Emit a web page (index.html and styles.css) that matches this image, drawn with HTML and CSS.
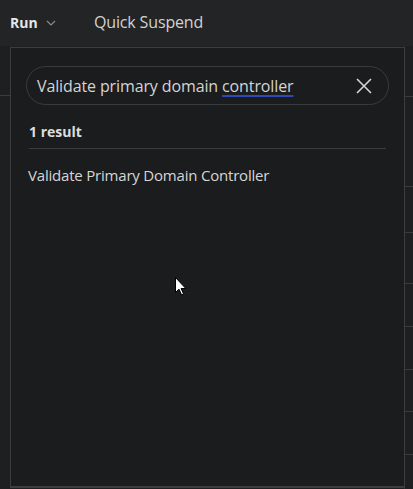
FILE: index.html
```html
<!DOCTYPE html>
<html>
<head>
<meta charset="utf-8">
<link rel="stylesheet" href="styles.css">
</head>
<body>
<header class="topbar">
  <button class="run">Run
    <svg class="chev" width="10" height="6" viewBox="0 0 10 6"><path d="M1 1 L5 5 L9 1" fill="none" stroke="#8a8b8d" stroke-width="1.2"/></svg>
  </button>
  <span class="quick">Quick Suspend</span>
</header>
<main class="content">
  <div class="col-left">
    <div class="row r-first"></div>
  </div>
  <div class="col-mid"></div>
  <div class="col-right">
    <div class="row h50"></div>
    <div class="row h90"></div>
    <div class="row h46"></div>
    <div class="row h51"></div>
    <div class="row h43"></div>
    <div class="row h43"></div>
    <div class="row h42"></div>
    <div class="row h43"></div>
  </div>

  <section class="panel">
    <div class="search">
      <span class="query">Validate primary domain <span class="spell">controller</span></span>
      <svg class="clear" width="16" height="16" viewBox="0 0 16 16"><path d="M1 1 L15 15 M15 1 L1 15" stroke="#d4d4d4" stroke-width="1.6" fill="none"/></svg>
    </div>
    <div class="count">1 result</div>
    <ul class="results">
      <li>Validate Primary Domain Controller</li>
    </ul>
  </section>

  <svg class="cursor" width="12" height="19" viewBox="0 0 12 19"><path d="M0.5 0.5 L0.5 15.5 L4 12.2 L6.6 18 L8.6 17.1 L6.1 11.5 L10.8 11.5 Z" fill="#fff" stroke="#000" stroke-width="1"/></svg>
</main>
</body>
</html>
```
FILE: styles.css
```css
* { box-sizing: border-box; }
html, body { margin: 0; padding: 0; }
body {
  width: 413px;
  height: 489px;
  overflow: hidden;
  background: #1e1f21;
  font-family: "Open Sans", "Noto Sans", sans-serif;
  color: #d6d6d6;
}
.topbar {
  height: 46px;
  background: #232426;
  display: flex;
  align-items: center;
  padding: 0 0 2px 10px;
}
.run {
  background: none;
  border: 0;
  padding: 0;
  color: #e6e6e6;
  font: 700 14px "Open Sans", "Noto Sans", sans-serif;
  display: flex;
  align-items: center;
  gap: 8px;
  width: 84px;
}
.chev { margin-top: 1px; }
.quick {
  font-size: 16px;
  color: #d2d2d2;
  letter-spacing: -0.15px;
}
.content {
  position: relative;
  display: flex;
  height: 443px;
}
.col-left { width: 10px; }
.col-mid { width: 394px; }
.col-right { flex: 1; border-left: 1px solid #303133; }
.row { border-bottom: 1px solid #3a3b3d; }
.r-first { height: 50px; }
.h50 { height: 51px; }
.h90 { height: 90px; }
.h46 { height: 46px; }
.h51 { height: 51px; }
.h43 { height: 43px; }
.h42 { height: 42px; }

.panel {
  position: absolute;
  left: 10px;
  top: 1px;
  width: 395px;
  height: 441px;
  background: #1b1c1e;
  border: 1px solid #3c3d3f;
  border-bottom-width: 2px;
  padding: 18px 15px 0 15px;
}
.search {
  height: 39px;
  border: 1px solid #3a3b3d;
  border-radius: 20px;
  display: flex;
  align-items: center;
  justify-content: space-between;
  padding: 0 16px 0 10px;
}
.query {
  font-size: 16px;
  color: #d4d4d4;
  letter-spacing: -0.12px;
}
.spell {
  text-decoration: underline;
  text-decoration-color: #3048b8;
  text-decoration-thickness: 2px;
  text-underline-offset: 3px;
}
.count {
  margin: 17px 3px 0 3px;
  font-size: 14px;
  font-weight: 700;
  color: #dedede;
  padding-bottom: 7px;
  border-bottom: 1px solid #3a3b3d;
}
.results {
  list-style: none;
  margin: 0;
  padding: 0 0 0 2px;
}
.results li {
  padding-top: 16px;
  font-size: 15px;
  color: #d6d6d6;
  letter-spacing: -0.2px;
}
.cursor {
  position: absolute;
  left: 175px;
  top: 231px;
}
```
